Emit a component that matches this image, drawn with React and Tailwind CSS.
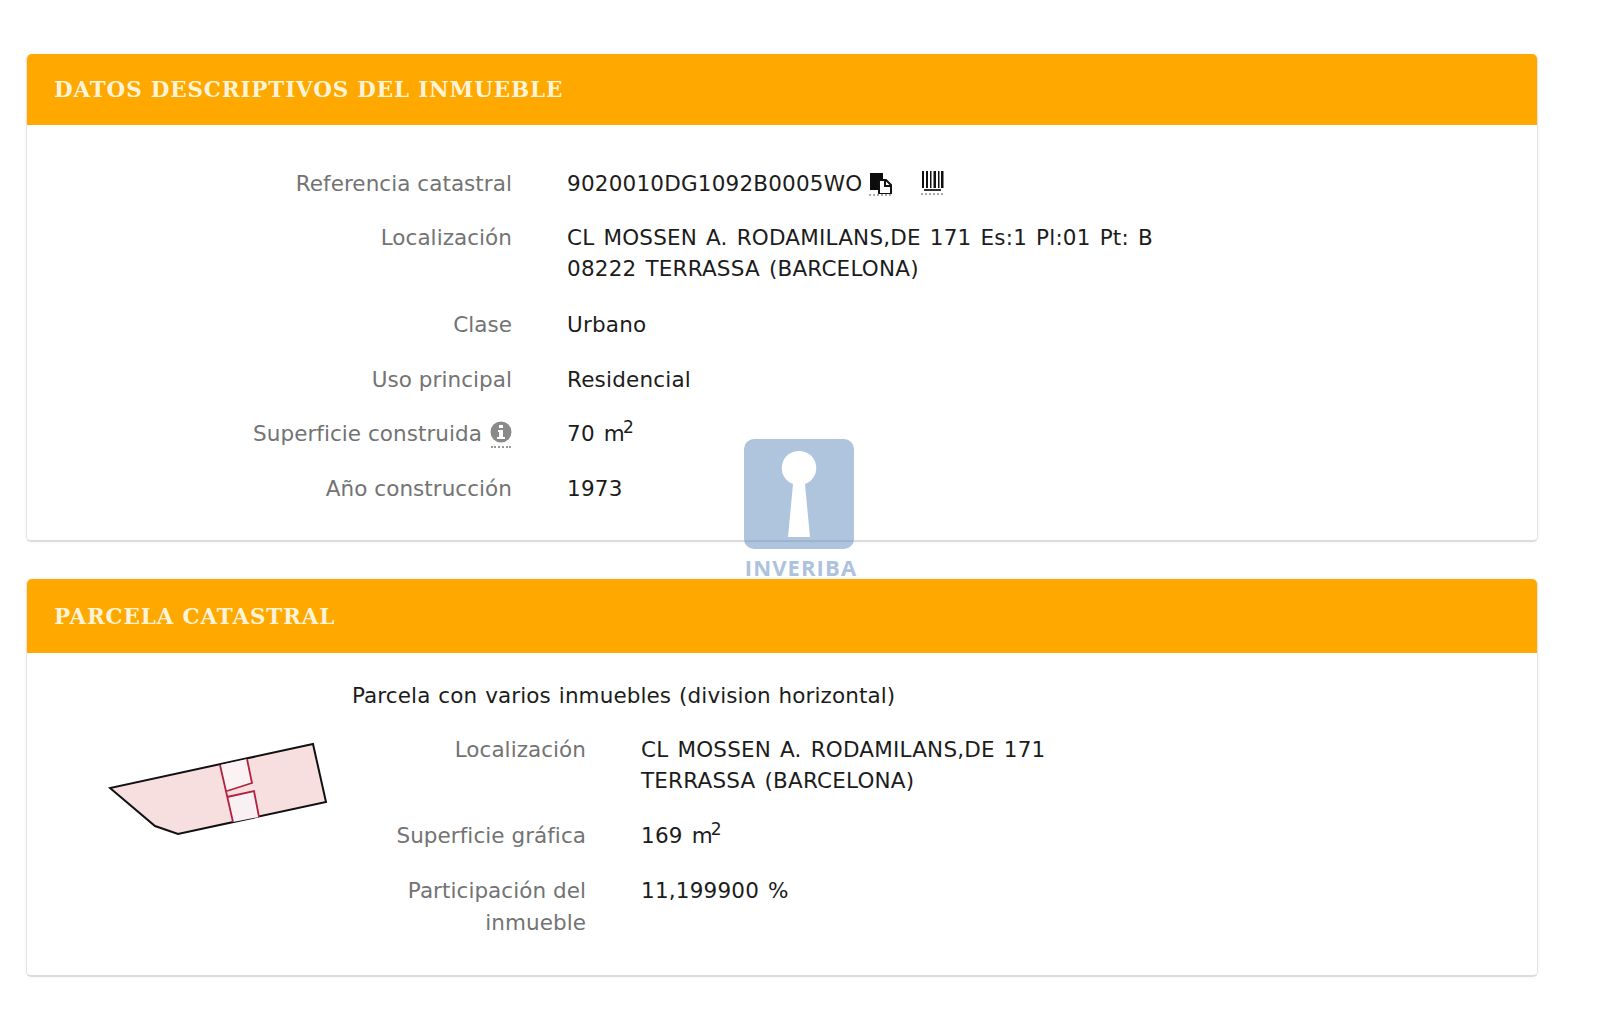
const F = { fontFamily: '"DejaVu Sans", sans-serif' };

function CopyIcon() {
  return (
    <span className="inline-flex flex-col items-center ml-[6px] w-[24px] mt-[3px]">
      <svg width="23" height="23" viewBox="0 0 23 23">
        <path d="M1 2h13v6h-2l-3 0v11H1z" fill="#0d0d0d" />
        <path d="M10 9h7l5 5v9H10z" fill="#fff" stroke="#111" strokeWidth="2" />
        <path d="M16 9v6h6" fill="none" stroke="#111" strokeWidth="2" />
      </svg>
      <span className="w-[22px] border-t-2 border-dotted border-[#aaa]" />
    </span>
  );
}

function BarcodeIcon() {
  return (
    <span className="inline-flex flex-col items-center ml-[28px] w-[24px] mt-[2px]">
      <svg width="23" height="23" viewBox="0 0 23 23">
        <path d="M1 1h2v17H1zM5 1h2v17H5zM9 1h1.500v17H9zM12.500 1h2.500v17h-2.500zM17 1h1.500v17H17zM20 1H22.500v17H20z" fill="#111" />
        <path d="M3 19h17v2H3z" fill="#333" />
      </svg>
      <span className="w-[22px] border-t-2 border-dotted border-[#aaa]" />
    </span>
  );
}

function InfoIcon() {
  return (
    <span className="inline-flex flex-col items-center ml-[8px] w-[22px] mt-[3px]">
      <svg width="22" height="22" viewBox="0 0 22 22">
        <circle cx="11" cy="11" r="10.500" fill="#8a8a8a" />
        <path d="M9 4h4v3H9zM8 9h5v7h2v2H7v-2h2v-5H8z" fill="#fff" />
      </svg>
      <span className="w-[20px] border-t-2 border-dotted border-[#999] mt-[3px]" />
    </span>
  );
}

function Row({ label, w, children, mb = "mb-[24px]" }) {
  return (
    <div className={`flex gap-[55px] text-[21.500px] leading-[31px] ${mb}`}>
      <div className={`${w} shrink-0 text-right text-[#737373] tracking-[0.05px]`}>{label}</div>
      <div className="text-[#1c1c1c] tracking-[0.2px] [word-spacing:2px]">{children}</div>
    </div>
  );
}

function Header({ title, h }) {
  return (
    <div className={`${h} bg-[#ffa800] rounded-t-[5px] flex items-center pl-[27px] pt-[2px] font-bold text-[#fdf3d8] text-[21.500px] tracking-[0.82px]`} style={{ fontFamily: '"DejaVu Serif", serif' }}>
      {title}
    </div>
  );
}

function Sup({ children }) {
  return <sup className="text-[17px] font-medium leading-none align-baseline ml-[-2px]">{children}</sup>;
}

export default function App() {
  return (
    <div className="relative w-[1600px] h-[1015px] bg-white overflow-hidden px-[26px] pt-[54px]" style={F}>
      <section className="w-[1512px] rounded-[5px] border-b-2 border-x border-[#dcdcdc] border-x-[#e4e4e4] shadow-[0_0_4px_rgba(0,0,0,0.05)]">
        <Header title="DATOS DESCRIPTIVOS DEL INMUEBLE" h="h-[71px]" />
        <div className="pt-[43px] pb-[36px] pl-[40px]">
          <Row label="Referencia catastral" w="w-[445px]" mb="mb-[23px]">
            <span className="flex items-start">9020010DG1092B0005WO<CopyIcon /><BarcodeIcon /></span>
          </Row>
          <Row label="Localización" w="w-[445px]" mb="mb-[25px]">
            CL MOSSEN A. RODAMILANS,DE 171 Es:1 Pl:01 Pt: B<br />08222 TERRASSA (BARCELONA)
          </Row>
          <Row label="Clase" w="w-[445px]">Urbano</Row>
          <Row label="Uso principal" w="w-[445px]" mb="mb-[23px]">Residencial</Row>
          <Row label={<span className="inline-flex items-start justify-end">Superficie construida<InfoIcon /></span>} w="w-[445px]">
            70 m<Sup>2</Sup>
          </Row>
          <Row label="Año construcción" w="w-[445px]" mb="mb-0">1973</Row>
        </div>
      </section>

      <section className="w-[1512px] mt-[37px] h-[398px] rounded-[5px] border-b-2 border-x border-[#dcdcdc] border-x-[#e4e4e4] shadow-[0_0_4px_rgba(0,0,0,0.05)]">
        <Header title="PARCELA CATASTRAL" h="h-[74px]" />
        <div className="flex pt-[27px]">
          <div className="w-[325px] shrink-0 pt-[60px] pl-[81px]">
            <svg width="225" height="100" viewBox="108 740 225 100" className="block">
              <path d="M110 788L155 826L178 834L326 802L313 744Z" fill="#f7dfdf" stroke="#111" strokeWidth="2" />
              <path d="M220 765L247 759L252 783L227 791Z" fill="#fbf3f3" />
              <path d="M227 797L254 791L259 817L233 822Z" fill="#f9f0f3" />
              <path d="M220 765L233 822M247 759L252 783L227 791M227 797L254 791L259 817" fill="none" stroke="#b3213f" strokeWidth="1.800" />
            </svg>
          </div>
          <div>
            <div className="text-[21.500px] leading-[31px] text-[#1c1c1c] mb-[23px] tracking-[0.1px] [word-spacing:1px]">Parcela con varios inmuebles (division horizontal)</div>
            <Row label="Localización" w="w-[234px]" mb="mb-[24px]">
              CL MOSSEN A. RODAMILANS,DE 171<br />TERRASSA (BARCELONA)
            </Row>
            <Row label="Superficie gráfica" w="w-[234px]" mb="mb-[24px]">
              169 m<Sup>2</Sup>
            </Row>
            <Row label={<span className="block leading-[32px]">Participación del<br />inmueble</span>} w="w-[234px]" mb="mb-0">11,199900 %</Row>
          </div>
        </div>
      </section>

      <div className="absolute left-[744px] top-[439px] w-[114px] flex flex-col items-center">
        <svg width="110" height="110" viewBox="0 0 110 110" className="block self-start">
          <path fillRule="evenodd" fill="#5f89bc" fillOpacity="0.5" d="M10 0H100A10 10 0 0 1 110 10V100A10 10 0 0 1 100 110H10A10 10 0 0 1 0 100V10A10 10 0 0 1 10 0ZM55 12A17 17 0 0 0 49 45L44 98H66L61 45A17 17 0 0 0 55 12Z" />
        </svg>
        <div className="text-[22px] leading-none mt-[7px] font-bold tracking-[1.1px] text-[#adc2dd]" style={{ fontFamily: '"Open Sans", sans-serif' }}>INVERIBA</div>
      </div>
    </div>
  );
}
